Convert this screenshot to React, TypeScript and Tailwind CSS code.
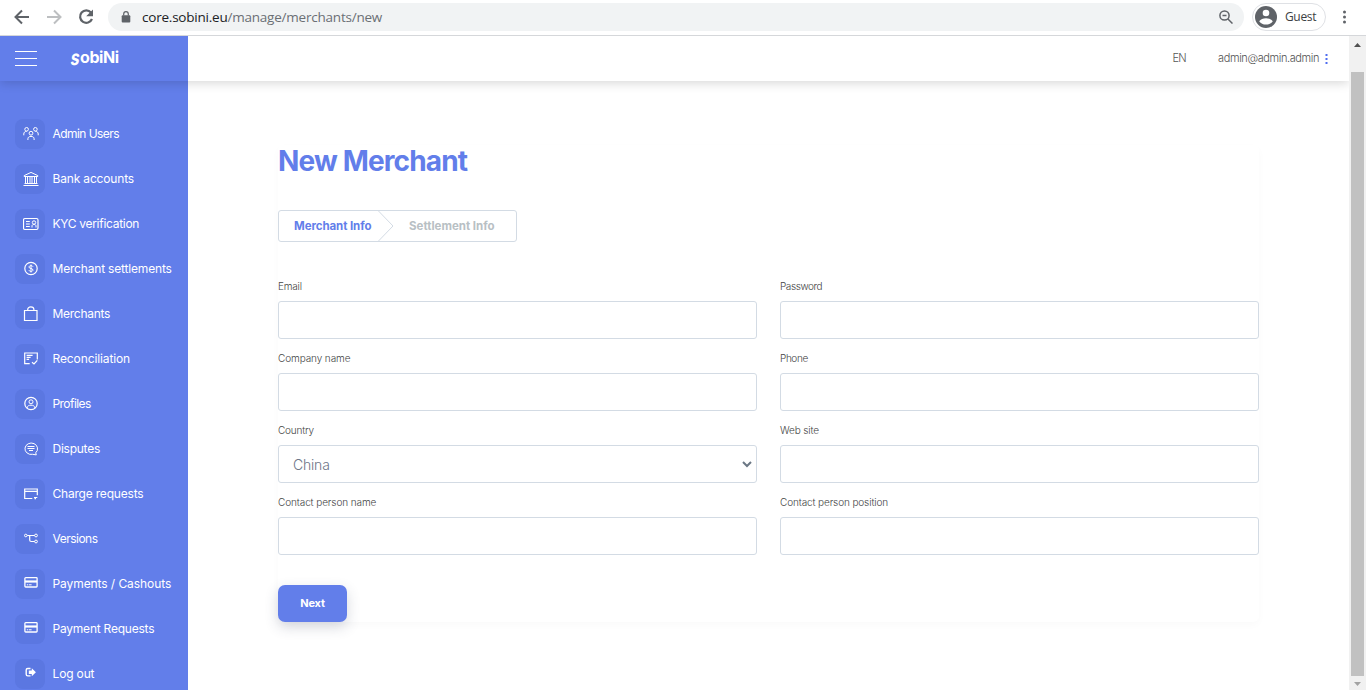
import type { ReactNode } from "react";

const icons: Record<string, ReactNode> = {
  users: (
    <>
      <circle cx="3.6" cy="3.3" r="1.8" />
      <circle cx="12.4" cy="3.3" r="1.8" />
      <circle cx="8" cy="7.2" r="1.9" />
      <path d="M.8 9.3V8c0-1.6 1-2.6 2.8-2.6M15.2 9.3V8c0-1.6-1-2.6-2.8-2.6M4.9 14v-1.2c0-1.5 1.2-2.4 3.1-2.4s3.1.9 3.1 2.4V14" />
    </>
  ),
  bank: (
    <path d="M1.2 5.5v-.9L8 1.4l6.800 3.200v.9zM.5 14.500h15M1.500 12.500h13M2.500 6v6M4.500 6v6M7 6v6M9 6v6M11.500 6v6M13.500 6v6" />
  ),
  kyc: (
    <>
      <rect x=".5" y="2.500" width="14.500" height="11" rx="1.500" strokeWidth="1.200" />
      <path d="M3 5.500h3.800M3 8h3.800M3 10.500h3.800M9 11.500V10c0-1 .8-1.500 2-1.500s2 .5 2 1.500v1.500" />
      <circle cx="11" cy="6.500" r="1.700" />
    </>
  ),
  dollar: (
    <>
      <circle cx="8" cy="7.500" r="6.200" strokeWidth="1.200" />
      <path d="M10 5.700C9.700 5 9 4.700 8 4.700c-1.200 0-2 .5-2 1.400 0 2 4 .8 4 2.900 0 .9-.9 1.400-2 1.400s-1.800-.4-2.100-1.200M8 3.500v8" />
    </>
  ),
  bag: (
    <path d="M1.500 4.500h12.500v10H1.500zM4.700 4.500V3.600C4.700 2 6 .8 7.800.8S10.900 2 10.900 3.600v.9" strokeWidth="1.200" />
  ),
  recon: (
    <path d="M14.300 8.500V2H1.700v10.700h5M3.600 4.300h6M3.600 6.300h4M3.600 8.300h2.500M9 11.300l2 1.700 3.300-3.600" strokeWidth="1.200" />
  ),
  profile: (
    <>
      <circle cx="8" cy="7.500" r="6.200" strokeWidth="1.200" />
      <circle cx="8" cy="5.800" r="2" />
      <path d="M4.400 12.200v-.8c0-1.400 1.400-2.200 3.600-2.200s3.600.8 3.600 2.200v.8" />
    </>
  ),
  chat: (
    <path d="M12.700 11.800a6.300 5.700 0 1 0-3 1.500l3.600.6zM4.500 5.500h7M4.500 7.500h7M6 9.500h4" />
  ),
  card: (
    <path d="M9.300 12.500H1.700V3h12.600v6.300M1.700 5.400h12.600M11 11.500h3.300M11.500 12.700h1.500" strokeWidth="1.200" />
  ),
  nodes: (
    <>
      <circle cx="2.800" cy="4.500" r="1.300" />
      <circle cx="13" cy="4.500" r="1.400" />
      <circle cx="13" cy="10.500" r="1.400" />
      <path d="M4.200 4.500h7.400M6.700 4.500v4.500c0 1 .6 1.500 1.500 1.500h3.400" strokeWidth="1.200" />
    </>
  ),
  solidCard: (
    <>
      <rect x="1.900" y="1.700" width="12.200" height="9.300" rx=".8" strokeWidth="1.300" />
      <path d="M2 5.500h12" strokeWidth="2.200" />
      <path d="M3.800 8.800h1.500M6 8.800h2.600" />
    </>
  ),
  logout: (
    <>
      <path d="M7.500 2.500H4.800c-1 0-1.600.6-1.600 1.600v4.200c0 1 .6 1.600 1.600 1.600h2.700" strokeWidth="1.400" />
      <path d="M5.800 4.400h3V2.200l4.100 4-4.100 4V8h-3z" fill="currentColor" stroke="none" />
    </>
  ),
};

const menu = [
  { icon: "users", label: "Admin Users", cls: "tracking-[-0.55px]" },
  { icon: "bank", label: "Bank accounts", cls: "tracking-[-0.16px]" },
  { icon: "kyc", label: "KYC verification", cls: "tracking-[-0.29px]" },
  { icon: "dollar", label: "Merchant settlements", cls: "tracking-[-0.18px]" },
  { icon: "bag", label: "Merchants", cls: "tracking-[-0.28px]" },
  { icon: "recon", label: "Reconciliation", cls: "tracking-[-0.11px]" },
  { icon: "profile", label: "Profiles", cls: "tracking-[-0.56px]" },
  { icon: "chat", label: "Disputes", cls: "tracking-[-0.25px]" },
  { icon: "card", label: "Charge requests", cls: "tracking-[-0.2px]" },
  { icon: "nodes", label: "Versions", cls: "tracking-[-0.5px]" },
  { icon: "solidCard", label: "Payments / Cashouts", cls: "tracking-[-0.08px]" },
  { icon: "solidCard", label: "Payment Requests", cls: "tracking-[-0.22px]" },
  { icon: "logout", label: "Log out", cls: "tracking-[-0.15px]" },
];

const fields = [
  { label: "Email", cls: "tracking-[-0.2px]" },
  { label: "Password", cls: "tracking-[-0.42px]" },
  { label: "Company name", cls: "tracking-[-0.1px]" },
  { label: "Phone", cls: "tracking-[-0.4px]" },
  { label: "Country", cls: "tracking-[-0.2px]", value: "China" },
  { label: "Web site", cls: "tracking-[-0.15px]" },
  { label: "Contact person name", cls: "tracking-[-0.1px]" },
  { label: "Contact person position", cls: "tracking-[-0.12px]" },
];

function BrowserBar() {
  return (
    <div className="flex h-9 shrink-0 items-center border-b border-[#d5d7da] bg-white pb-px pl-[13px] text-[#5f6368]">
      <svg className="h-[18px] w-[18px]" viewBox="0 0 18 18" fill="none" stroke="currentColor" strokeWidth="2">
        <path d="M16 9H3M9 2.500 2.500 9 9 15.500" />
      </svg>
      <svg className="ml-[14px] h-[18px] w-[18px] text-[#bdbfc1]" viewBox="0 0 18 18" fill="none" stroke="currentColor" strokeWidth="2">
        <path d="M2 9h13M9 2.500 15.500 9 9 15.500" />
      </svg>
      <svg className="ml-[14px] h-[18px] w-[18px]" viewBox="0 0 18 18" fill="none" stroke="currentColor" strokeWidth="2.200">
        <path d="M14 4.500A6.200 6.200 0 1 0 15 11" />
        <path d="M16 1.500v6.800H9.200z" fill="currentColor" stroke="none" />
      </svg>
      <div className="ml-[13px] flex h-7 w-[1136px] items-center rounded-full bg-[#f1f3f4] pr-[11px] pl-[13px]">
        <svg className="h-3 w-[10px]" viewBox="0 0 10 12">
          <rect x=".7" y="4.300" width="8.600" height="7.300" rx="1" fill="currentColor" />
          <path d="M2.700 4.500V3a2.300 2.300 0 0 1 4.600 0v1.500" fill="none" stroke="currentColor" strokeWidth="1.200" />
        </svg>
        <span className="ml-[11px] font-['Open_Sans','Noto_Sans',sans-serif] text-[13.5px] tracking-[-0.22px] text-[#6b6f74]">
          <span className="text-[#202124]">core.sobini.eu</span>/manage/merchants/new
        </span>
        <svg className="ml-auto h-[14px] w-[14px]" viewBox="0 0 14 14" fill="none" stroke="currentColor" strokeWidth="1.500">
          <circle cx="5.500" cy="5.500" r="4.600" />
          <path d="m8.700 8.700 4.800 4.800M3.500 5.500h4" />
        </svg>
      </div>
      <div className="ml-2 flex h-7 w-[74px] items-center rounded-full border border-[#dfe1e5] pl-[2px]">
        <svg className="h-[22px] w-[22px]" viewBox="0 0 22 22">
          <circle cx="11" cy="11" r="11" fill="#5f6368" />
          <circle cx="11" cy="7" r="3.300" fill="white" />
          <path d="M4.200 15.200c1.300-2 4-3 6.800-3s5.500 1 6.800 3c-1.600 2.300-4 3.400-6.800 3.400s-5.200-1.100-6.800-3.400z" fill="white" />
        </svg>
        <span className="ml-2 font-['Open_Sans','Noto_Sans',sans-serif] text-[12px] tracking-[-0.35px] text-[#3c4043]">Guest</span>
      </div>
      <svg className="ml-[16px] h-[14px] w-[6px]" viewBox="0 0 6 14" fill="currentColor">
        <circle cx="2.500" cy="2" r="1.500" />
        <circle cx="2.500" cy="7" r="1.500" />
        <circle cx="2.500" cy="12" r="1.500" />
      </svg>
    </div>
  );
}

function TopBar() {
  return (
    <header className="relative z-10 flex h-[45px] shrink-0 shadow-[0_2px_10px_rgba(0,0,0,0.16)]">
      <div className="flex w-[188px] items-center bg-[#627eea] pl-[15px]">
        <div className="flex w-[22px] flex-col gap-[6px]">
          <span className="h-px bg-white" />
          <span className="h-px bg-white" />
          <span className="h-px bg-white" />
        </div>
        <div className="ml-[34px] flex pb-[3px] text-[16px] leading-none font-bold text-white">
          <span className="origin-center scale-y-130 -skew-x-12">s</span>
          <span className="tracking-[-0.4px]">obiNi</span>
        </div>
      </div>
      <div className="flex flex-1 items-center justify-end bg-white pr-[21px] text-[11px] font-light text-[#555]">
        <span className="tracking-[-0.6px]">EN</span>
        <span className="ml-[32px] tracking-[-0.4px]">admin@admin.admin</span>
        <svg className="ml-[6px] h-[10px] w-[3px]" viewBox="0 0 3 10" fill="#4f6df0">
          <rect x=".5" y="0" width="2" height="2" />
          <rect x=".5" y="4" width="2" height="2" />
          <rect x=".5" y="8" width="2" height="2" />
        </svg>
      </div>
    </header>
  );
}

function Sidebar() {
  return (
    <nav className="flex w-[188px] shrink-0 flex-col gap-[15px] overflow-hidden bg-[#627eea] pt-[38px] pl-[15px]">
      {menu.map((m) => (
        <div key={m.label} className="flex h-[30px] shrink-0 items-center text-white">
          <div className="flex h-[30px] w-[30px] items-center justify-center rounded-[8px] bg-[#5b77e1] pl-px">
            <svg className="h-4 w-4" viewBox="0 0 16 16" fill="none" stroke="currentColor" strokeWidth="1">
              {icons[m.icon]}
            </svg>
          </div>
          <span className="ml-[7.5px] text-[12px] whitespace-nowrap">
            <span className={m.cls}>{m.label}</span>
          </span>
        </div>
      ))}
    </nav>
  );
}

function Stepper() {
  return (
    <div className="mt-[32px] flex h-8 w-[239px] items-stretch rounded-[3px] border border-[#d3dbe4] text-[11.5px] font-bold">
      <div className="flex w-[99px] items-center pt-[2px] pl-[15px] whitespace-nowrap text-[#627eea]">
        <span className="tracking-[-0.08px]">Merchant Info</span>
      </div>
      <svg className="h-[30px] w-4" viewBox="0 0 16 30" fill="none" stroke="#d3dbe4">
        <path d="M.5 0l14.500 15-14.500 15" />
      </svg>
      <div className="flex items-center pt-[2px] pl-[15px] whitespace-nowrap text-[#b8c0c4]">
        <span>Settlement Info</span>
      </div>
    </div>
  );
}

function Content() {
  return (
    <main className="flex-1 bg-white pt-[64px] pl-[90px]">
      <div className="h-[477px] w-[981px] rounded-[6px] shadow-[0_3px_8px_rgba(0,0,0,0.025)]">
        <h1 className="h-[33px] text-[28px] leading-[32px] font-bold text-[#627eea]">
          <span className="tracking-[-0.85px]">New Merchant</span>
        </h1>
        <Stepper />
        <form className="mt-[37px] grid grid-cols-2 gap-x-[23px]">
          {fields.map((f) => (
            <div key={f.label} className="h-[72px]">
              <label className="flex h-[22px] items-start text-[10px] leading-[14px] font-light text-[#444]">
                <span className={f.cls}>{f.label}</span>
              </label>
              <div className="flex h-[38px] items-center justify-between rounded-[3px] border border-[#d3dbe4] pr-[4px] pl-[14px] text-[14px] font-light text-[#6e7687]">
                {f.value && (
                  <>
                    <span className="pt-px tracking-[-0.2px]">{f.value}</span>
                    <svg className="h-[7px] w-[10px]" viewBox="0 0 10 7" fill="none" stroke="#6b7785" strokeWidth="2">
                      <path d="m1 1 4 4 4-4" />
                    </svg>
                  </>
                )}
              </div>
            </div>
          ))}
        </form>
        <button className="mt-[18px] h-[37px] w-[69px] rounded-[7px] bg-[#627eea] text-[11px] font-bold text-white shadow-[0_5px_14px_rgba(50,60,90,0.2)]">
          <span className="tracking-[-0.2px]">Next</span>
        </button>
      </div>
    </main>
  );
}

function Scrollbar() {
  return (
    <div className="flex w-[17px] shrink-0 flex-col items-center bg-[#f1f1f1]">
      <div className="flex h-[36px] items-start pt-[7px]">
        <svg className="h-[4px] w-[7px]" viewBox="0 0 7 4" fill="#505050"><path d="M0 4 3.500 0 7 4z" /></svg>
      </div>
      <div className="h-[604px] w-[13px] bg-[#c1c1c1]" />
      <svg className="mt-[6px] h-[4px] w-[7px]" viewBox="0 0 7 4" fill="#a3a3a3"><path d="M0 0h7L3.500 4z" /></svg>
    </div>
  );
}

export default function App() {
  return (
    <div className="flex h-[690px] w-[1366px] flex-col overflow-hidden bg-white font-['Inter',sans-serif]">
      <BrowserBar />
      <div className="flex min-h-0 flex-1">
        <div className="flex min-w-0 flex-1 flex-col overflow-hidden">
          <TopBar />
          <div className="flex min-h-0 flex-1">
            <Sidebar />
            <Content />
          </div>
        </div>
        <Scrollbar />
      </div>
    </div>
  );
}
